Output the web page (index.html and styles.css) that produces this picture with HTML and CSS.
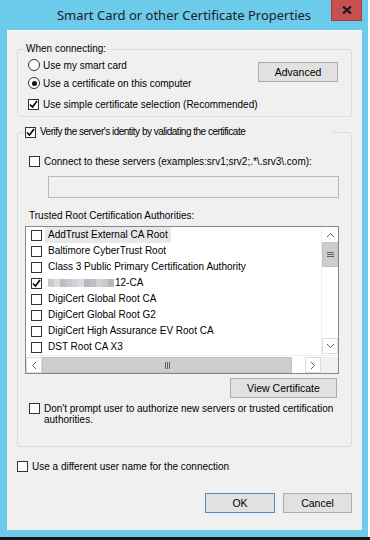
FILE: index.html
```html
<!DOCTYPE html>
<html lang="en">
<head>
    <meta charset="UTF-8">
    <meta name="viewport" content="width=device-width, initial-scale=1.0">
    <title>Smart Card or other Certificate Properties</title>
    <link rel="stylesheet" href="styles.css">
</head>
<body>

<div class="window">
    <div class="titlebar">
        <span></span>
        <span class="title">Smart Card or other Certificate Properties</span>
        <button class="close">
            <svg width="10" height="8" viewBox="0 0 10 8"><path d="M1 0.5 L9 7.5 M9 0.5 L1 7.5" stroke="#1a1a1a" stroke-width="2.2"/></svg>
        </button>
    </div>

    <div class="client">
        <fieldset class="group group-connect">
            <legend>When connecting:</legend>
            <div class="connect-body">
                <div class="options">
                    <label class="opt"><span class="radio"></span>Use my smart card</label>
                    <label class="opt"><span class="radio on"></span>Use a certificate on this computer</label>
                    <label class="opt opt-simple"><span class="check"><svg width="9" height="9" viewBox="0 0 9 9"><path d="M1 4.5 L3.5 7 L8 1" stroke="#000" stroke-width="1.6" fill="none"/></svg></span>Use simple certificate selection (Recommended)</label>
                </div>
                <button class="btn btn-advanced">Advanced</button>
            </div>
        </fieldset>

        <fieldset class="group group-verify">
            <legend><label class="opt"><span class="check"><svg width="9" height="9" viewBox="0 0 9 9"><path d="M1 4.5 L3.5 7 L8 1" stroke="#000" stroke-width="1.6" fill="none"/></svg></span><span class="verify-text">Verify the server's identity by validating the certificate</span></label></legend>

            <label class="opt opt-servers"><span class="check"></span>Connect to these servers (examples:srv1;srv2;.*\.srv3\.com):</label>
            <div class="servers-input"></div>

            <div class="list-label">Trusted Root Certification Authorities:</div>
            <div class="listbox">
                <div class="list-main">
                    <ul class="items">
                        <li><span class="check"></span><span class="item-text selected">AddTrust External CA Root</span></li>
                        <li><span class="check"></span><span class="item-text">Baltimore CyberTrust Root</span></li>
                        <li><span class="check"></span><span class="item-text">Class 3 Public Primary Certification Authority</span></li>
                        <li><span class="check"><svg width="9" height="9" viewBox="0 0 9 9"><path d="M1 4.5 L3.5 7 L8 1" stroke="#000" stroke-width="1.6" fill="none"/></svg></span><span class="item-text"><span class="blur"><i class="b1"></i><i class="b2"></i><i class="b3"></i><i class="b1"></i><i class="b4"></i><i class="b2"></i><i class="b5"></i><i class="b3"></i><i class="b4"></i><i class="b1"></i><i class="b5"></i></span>12-CA</span></li>
                        <li><span class="check"></span><span class="item-text">DigiCert Global Root CA</span></li>
                        <li><span class="check"></span><span class="item-text">DigiCert Global Root G2</span></li>
                        <li><span class="check"></span><span class="item-text">DigiCert High Assurance EV Root CA</span></li>
                        <li><span class="check"></span><span class="item-text">DST Root CA X3</span></li>
                    </ul>
                    <div class="vscroll">
                        <div class="arrow arrow-up"><svg width="9" height="6" viewBox="0 0 9 6"><path d="M1 5 L4.5 1.5 L8 5" stroke="#606060" fill="none"/></svg></div>
                        <div class="vthumb"><svg width="7" height="7" viewBox="0 0 7 7"><path d="M0 1.5 H7 M0 3.5 H7 M0 5.5 H7" stroke="#606060"/></svg></div>
                        <div class="vtrack"></div>
                        <div class="arrow arrow-down"><svg width="9" height="6" viewBox="0 0 9 6"><path d="M1 1 L4.5 4.5 L8 1" stroke="#606060" fill="none"/></svg></div>
                    </div>
                </div>
                <div class="hscroll">
                    <div class="arrow arrow-left"><svg width="6" height="9" viewBox="0 0 6 9"><path d="M5 1 L1.5 4.5 L5 8" stroke="#606060" fill="none"/></svg></div>
                    <div class="hthumb"><svg width="7" height="7" viewBox="0 0 7 7"><path d="M1.5 0 V7 M3.5 0 V7 M5.5 0 V7" stroke="#606060"/></svg></div>
                    <div class="htrack"></div>
                    <div class="arrow arrow-right"><svg width="6" height="9" viewBox="0 0 6 9"><path d="M1 1 L4.5 4.5 L1 8" stroke="#606060" fill="none"/></svg></div>
                    <div class="corner"></div>
                </div>
            </div>

            <div class="view-row">
                <button class="btn btn-view">View Certificate</button>
            </div>

            <label class="opt opt-prompt"><span class="check"></span><span>Don't prompt user to authorize new servers or trusted certification authorities.</span></label>
        </fieldset>

        <label class="opt opt-user"><span class="check"></span>Use a different user name for the connection</label>

        <div class="footer">
            <button class="btn btn-ok">OK</button>
            <button class="btn btn-cancel">Cancel</button>
        </div>
    </div>
</div>
<div class="screen-edge"></div>

</body>
</html>
```

FILE: styles.css
```css
body {
    margin: 0;
    padding: 0;
    width: 370px;
    height: 540px;
    background-color: #ffffff;
    font-family: 'Liberation Sans', Arial, sans-serif;
    font-size: 10px;
    color: #000;
    overflow: hidden;
}

.window {
    width: 368px;
    height: 537px;
    box-sizing: border-box;
    background-color: #6ccaeb;
    padding: 0 6px 7px 7px;
    display: flex;
    flex-direction: column;
}

.screen-edge {
    height: 3px;
    background-color: #161616;
}

/* Title bar */
.titlebar {
    height: 30px;
    margin: 0 -6px 0 -7px;
    display: grid;
    grid-template-columns: 1fr auto 1fr;
    align-items: start;
}

.title {
    font-family: 'Noto Sans', sans-serif;
    font-size: 13px;
    line-height: 31px;
    color: #1c1c1c;
}

.close {
    justify-self: end;
    width: 31px;
    height: 21px;
    margin-right: 6px;
    padding: 0;
    border: 1px solid #a33d3d;
    border-top: none;
    background-color: #c75050;
    display: flex;
    align-items: center;
    justify-content: center;
}

/* Client area */
.client {
    flex: 1;
    background-color: #f0f0f0;
    border-top: 1px solid #fbfbfb;
    padding: 12px 10px 0 10px;
    display: flex;
    flex-direction: column;
}

.group {
    margin: 0;
    min-width: 0;
    border: 1px solid #dcdcdc;
    border-radius: 3px;
}

.group legend {
    padding: 0 1px;
    line-height: 12px;
}

.opt {
    display: flex;
    align-items: center;
    height: 16px;
    white-space: nowrap;
}

.radio,
.check {
    flex: none;
    box-sizing: border-box;
    width: 11px;
    height: 11px;
    border: 1px solid #333;
    background-color: #fff;
    margin-right: 4px;
    display: flex;
    align-items: center;
    justify-content: center;
}

.radio {
    width: 12px;
    height: 12px;
    border-radius: 50%;
    margin-right: 3px;
}

.radio.on::after {
    content: "";
    width: 5px;
    height: 5px;
    border-radius: 50%;
    background-color: #111;
}

/* When connecting */
.group-connect {
    padding: 2px 13px 4px 10px;
}

.group-connect legend {
    margin-left: -3px;
}

.connect-body {
    display: flex;
}

.options {
    display: flex;
    flex-direction: column;
    gap: 2px;
}

.opt-simple {
    margin-top: 3px;
}

.btn {
    font-family: 'Liberation Sans', Arial, sans-serif;
    font-size: 10.5px;
    color: #000;
    background-color: #e1e1e1;
    border: 1px solid #adadad;
    padding: 0;
    height: 20px;
    box-sizing: border-box;
}

.btn-advanced {
    width: 80px;
    margin: 5px 0 0 auto;
}

/* Verify server */
.group-verify {
    margin-top: 8px;
    padding: 0 12px 21px 7px;
}

.group-verify legend {
    width: 310px;
    box-sizing: border-box;
    padding: 0 0 0 2px;
    margin-left: -2px;
    line-height: 14px;
}

.group-verify legend .opt {
    height: 14px;
}

.verify-text {
    letter-spacing: -0.5px;
}

.opt-servers {
    margin: 14px 0 0 4px;
}

.servers-input {
    height: 22px;
    box-sizing: border-box;
    margin: 7px 0 0 23px;
    border: 1px solid #b9b9b9;
    background-color: #f0f0f0;
}

.list-label {
    margin: 11px 0 0 4px;
    line-height: 14px;
}

.listbox {
    margin-top: 3px;
    border: 1px solid #828790;
    background-color: #fff;
}

.list-main {
    display: flex;
    height: 128px;
}

.items {
    flex: 1;
    list-style: none;
    margin: 0;
    padding: 0;
}

.items li {
    height: 16px;
    display: flex;
    align-items: center;
    padding-left: 5px;
    white-space: nowrap;
}

.items .check {
    margin-right: 3px;
}

.item-text {
    padding: 0 3px;
    line-height: 16px;
    display: flex;
    align-items: center;
}

.item-text.selected {
    background-color: #e8e8e8;
}

.blur {
    display: flex;
    height: 8px;
    margin-right: 1px;
}

.blur i {
    width: 6px;
    height: 8px;
}

.blur .b1 { background-color: #c9c9cc; }
.blur .b2 { background-color: #dcdcdf; }
.blur .b3 { background-color: #bfbcc8; }
.blur .b4 { background-color: #d3d0da; }
.blur .b5 { background-color: #b8b8bd; }

.vscroll {
    width: 17px;
    display: flex;
    flex-direction: column;
    border-left: 1px solid #f0f0f0;
    box-sizing: border-box;
}

.arrow {
    width: 16px;
    height: 16px;
    display: flex;
    align-items: center;
    justify-content: center;
    box-sizing: border-box;
    flex: none;
}

.arrow-down,
.arrow-left,
.arrow-right {
    border: 1px solid #dcdcdc;
}

.vthumb {
    height: 25px;
    margin-top: -1px;
    background-color: #cdcdcd;
    border: 1px solid #c2c2c2;
    box-sizing: border-box;
    display: flex;
    align-items: center;
    justify-content: center;
}

.vtrack {
    flex: 1;
}

.arrow-down {
    margin-bottom: 1px;
}

.hscroll {
    display: flex;
    height: 18px;
    padding-top: 1px;
    box-sizing: border-box;
    border-top: 1px solid #f0f0f0;
}

.hthumb {
    width: 250px;
    background-color: #cdcdcd;
    border: 1px solid #c2c2c2;
    box-sizing: border-box;
    display: flex;
    align-items: center;
    justify-content: center;
}

.htrack {
    flex: 1;
}

.corner {
    width: 17px;
    background-color: #f0f0f0;
}

.view-row {
    display: flex;
    justify-content: flex-end;
    margin-top: 4px;
    padding-right: 2px;
}

.btn-view {
    width: 107px;
}

.opt-prompt {
    height: auto;
    align-items: flex-start;
    white-space: normal;
    margin: 5px 0 0 4px;
    line-height: 11px;
}

.opt-user {
    margin-top: 11px;
}

.footer {
    display: flex;
    justify-content: flex-end;
    gap: 8px;
    margin-top: 19px;
}

.btn-ok {
    width: 70px;
    border-color: #3c8fd6;
}

.btn-cancel {
    width: 69px;
}
```
